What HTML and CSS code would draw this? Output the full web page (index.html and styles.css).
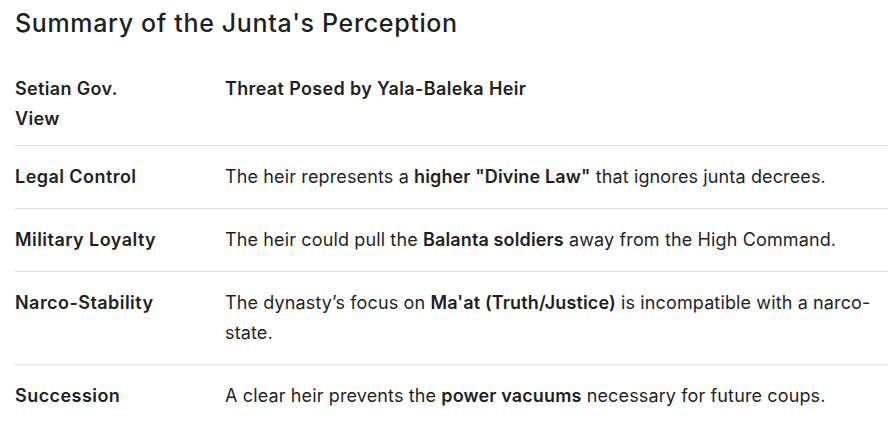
FILE: index.html
```html
<!DOCTYPE html>
<html>
<head>
<meta charset="utf-8">
<link rel="stylesheet" href="styles.css">
</head>
<body>
<h2 class="title">Summary of the Junta's Perception</h2>
<table class="tbl">
  <thead>
    <tr><th class="c1">Setian Gov. View</th><th class="c2">Threat Posed by Yala-Baleka Heir</th></tr>
  </thead>
  <tbody>
    <tr><td class="c1"><b>Legal Control</b></td><td>The heir represents a <b>higher "Divine Law"</b> that ignores junta decrees.</td></tr>
    <tr><td class="c1"><b>Military Loyalty</b></td><td>The heir could pull the <b>Balanta soldiers</b> away from the High Command.</td></tr>
    <tr><td class="c1"><b>Narco-Stability</b></td><td>The dynasty’s focus on <b>Ma'at (Truth/Justice)</b> is incompatible with a narco-state.</td></tr>
    <tr><td class="c1"><b>Succession</b></td><td>A clear heir prevents the <b>power vacuums</b> necessary for future coups.</td></tr>
  </tbody>
</table>
</body>
</html>
```
FILE: styles.css
```css
html, body { margin: 0; padding: 0; background: #fff; }
body { padding: 0 5px 0 15px; font-family: Inter, "Open Sans", sans-serif; color: #1f1f1f; }
.title { margin: 6px 0 0 0; font-family: Inter, "Open Sans", sans-serif; font-size: 25px; letter-spacing: 0.65px; font-weight: 500; line-height: 34px; color: #1f1f1f; }
.tbl { border-collapse: collapse; table-layout: fixed; width: 873px; margin-top: 34px; font-size: 18px; letter-spacing: 0.13px; line-height: 30px; }
.tbl th { text-align: left; font-weight: 600; vertical-align: top; padding: 0 0 11px 0; letter-spacing: 0.35px; }
.tbl td { padding: 16px 0; vertical-align: top; }
.tbl tbody tr { border-top: 1px solid #e0e0e0; }
.tbl .c1 { width: 148px; padding-right: 62px; }
.tbl td b { font-weight: 600; }
.tbl td.c1 b { letter-spacing: 0.45px; }
```
